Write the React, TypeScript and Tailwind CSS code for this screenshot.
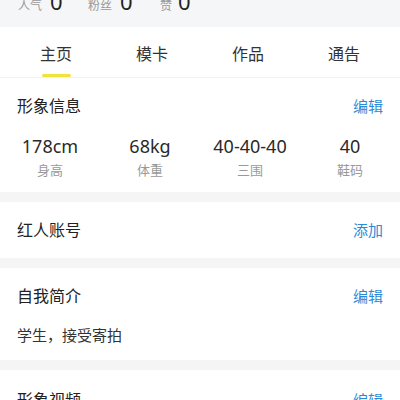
import React from "react";

const font = { fontFamily: '"Noto Sans", "Noto Sans CJK SC", sans-serif' };

function SectionHeader({ title, action }: { title: string; action: string }) {
  return (
    <div className="flex items-center justify-between h-[24px]">
      <span className="text-[16px] leading-[24px] text-[#222]">{title}</span>
      <span className="text-[15px] leading-[24px] text-[#2b8ad6]">{action}</span>
    </div>
  );
}

export default function App() {
  const tabs = ["主页", "模卡", "作品", "通告"];
  const stats = [
    { v: "178cm", l: "身高" },
    { v: "68kg", l: "体重" },
    { v: "40-40-40", l: "三围" },
    { v: "40", l: "鞋码" },
  ];
  return (
    <div className="w-[400px] h-[400px] overflow-hidden bg-[#f5f5f5]" style={font}>
      {/* top stats strip */}
      <div className="h-[27px] overflow-hidden bg-[#f5f6f8]">
        <div className="flex items-baseline pl-[18px] -mt-[13px]">
          <div className="flex items-baseline w-[70px]">
            <span className="text-[12px] text-[#999]">人气</span>
            <span className="ml-[8px] text-[22px] leading-[28px] text-[#222]">0</span>
          </div>
          <div className="flex items-baseline w-[72px]">
            <span className="text-[12px] text-[#999]">粉丝</span>
            <span className="ml-[8px] text-[22px] leading-[28px] text-[#222]">0</span>
          </div>
          <div className="flex items-baseline">
            <span className="text-[12px] text-[#999]">赞</span>
            <span className="ml-[6px] text-[22px] leading-[28px] text-[#222]">0</span>
          </div>
        </div>
      </div>

      {/* tabs */}
      <div className="bg-white border-b border-[#f2f2f2] px-[8px] grid grid-cols-4 h-[51px]">
        {tabs.map((t, i) => (
          <div key={t} className="flex flex-col items-center pt-[15px]">
            <span className="text-[16px] leading-[24px] text-[#333]">{t}</span>
            <div
              className={
                "mt-[8px] h-[3px] w-[29px] rounded-full " +
                (i === 0 ? "bg-[#f2e33a]" : "bg-transparent")
              }
            />
          </div>
        ))}
      </div>

      {/* 形象信息 */}
      <div className="bg-white pt-[16px] pb-[13px]">
        <div className="px-[17px]">
          <SectionHeader title="形象信息" action="编辑" />
        </div>
        <div className="grid grid-cols-4 mt-[16px]">
          {stats.map((s) => (
            <div key={s.l} className="flex flex-col items-center">
              <span className="text-[18px] leading-[24px] text-[#2a2a2a]">{s.v}</span>
              <span className="mt-[3px] text-[13px] leading-[18px] text-[#999]">{s.l}</span>
            </div>
          ))}
        </div>
      </div>

      {/* 红人账号 */}
      <div className="mt-[10px] bg-white h-[56px] px-[17px] flex items-center">
        <div className="w-full">
          <SectionHeader title="红人账号" action="添加" />
        </div>
      </div>

      {/* 自我简介 */}
      <div className="mt-[10px] bg-white px-[17px] pt-[16px] pb-[14px]">
        <SectionHeader title="自我简介" action="编辑" />
        <div className="mt-[16px] text-[15px] leading-[22px] text-[#333]">学生，接受寄拍</div>
      </div>

      {/* 形象视频 */}
      <div className="mt-[10px] bg-white px-[17px] pt-[18px] pb-[16px]">
        <SectionHeader title="形象视频" action="编辑" />
      </div>
    </div>
  );
}
